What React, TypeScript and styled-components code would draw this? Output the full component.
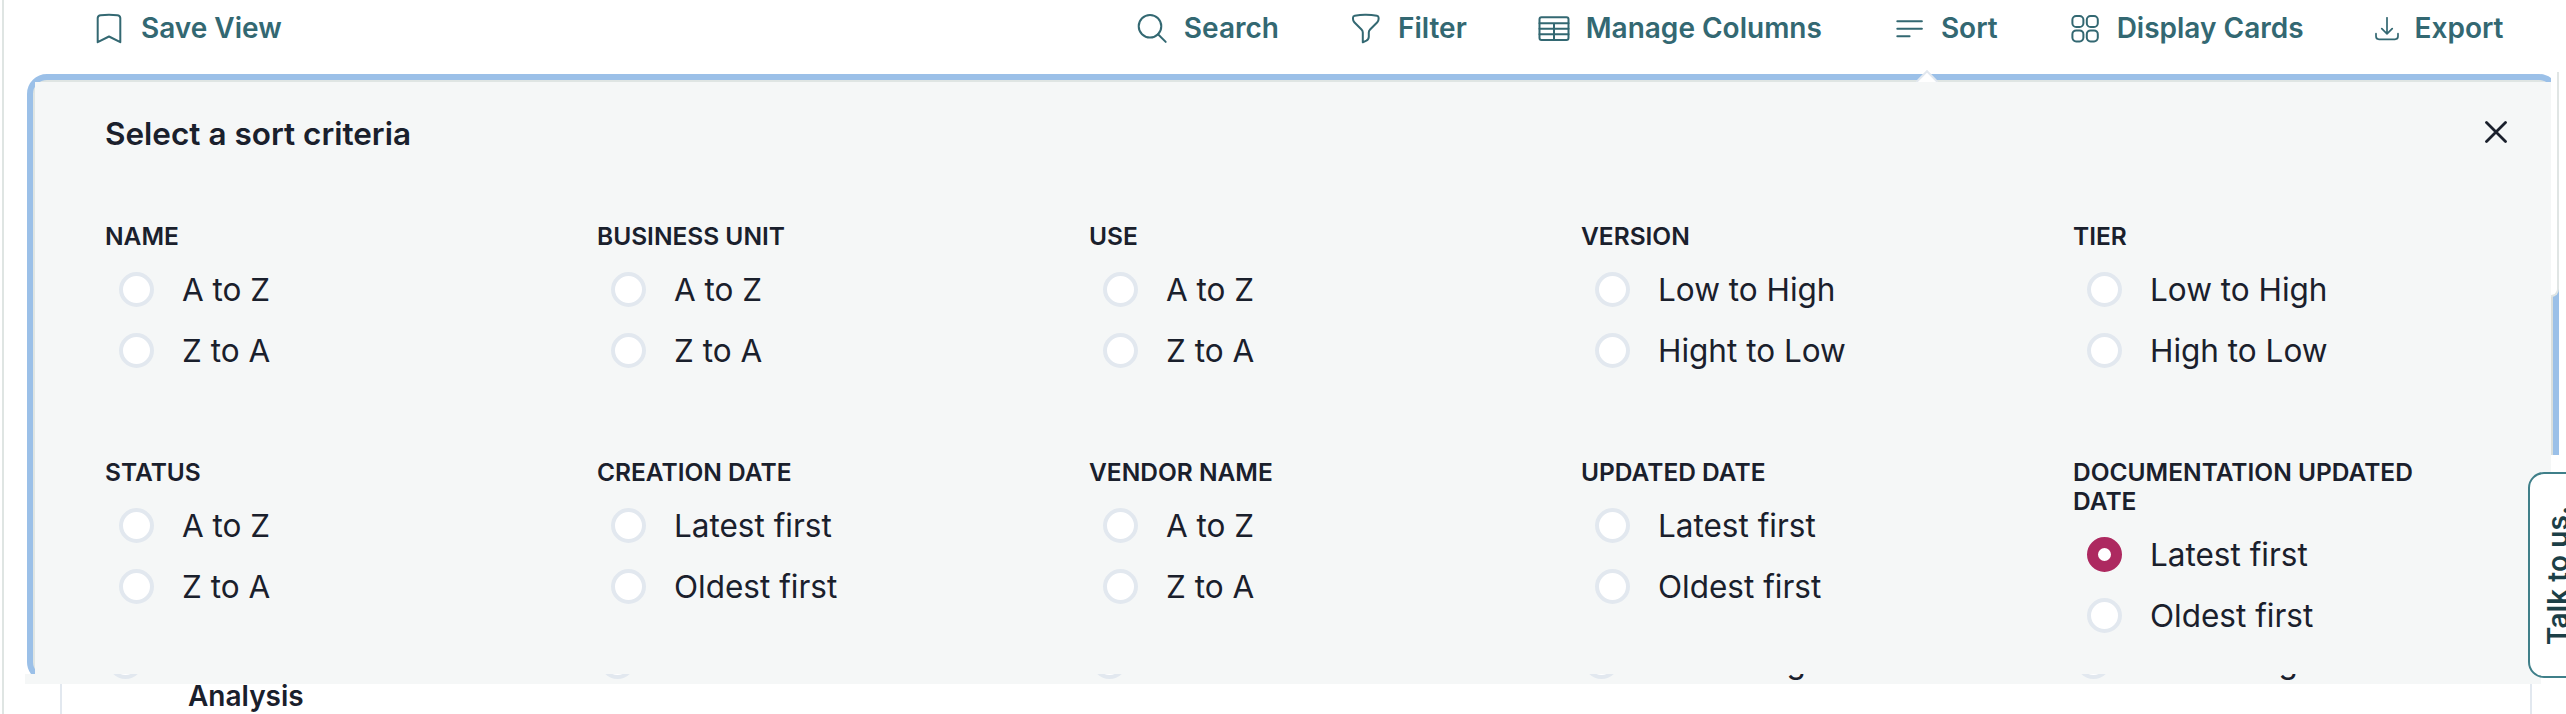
import React from "react";
import styled, { createGlobalStyle } from "styled-components";

const teal = "#336872";
const ink = "#1a202c";
const line = "#dfe5e3";
const ring = "#e2e8ef";
const surface = "#f5f7f7";
const blue = "#9bc0e8";

const GlobalStyle = createGlobalStyle`
  body {
    margin: 0;
    background: #fff;
    color: ${ink};
    font-family: Inter, "Liberation Sans", sans-serif;
    font-optical-sizing: none;
  }
  * { box-sizing: border-box; }
`;

const Page = styled.div`
  position: relative;
  width: 2566px;
  height: 714px;
  overflow: hidden;
  padding-left: 2px;
`;

const Shell = styled.main`
  height: 714px;
  border-left: 2px solid ${line};
`;

const Toolbar = styled.header`
  display: flex;
  justify-content: space-between;
  height: 72px;
  padding: 0 62.5px 16px 89px;
`;

const ToolGroup = styled.div`
  display: flex;
  gap: 71px;
`;

const Tool = styled.button`
  display: flex;
  align-items: center;
  gap: 16px;
  padding: 0;
  border: 0;
  background: none;
  color: ${teal};
  font: 600 28px/36px Inter, "Liberation Sans", sans-serif;
  white-space: nowrap;
  svg {
    display: block;
    position: relative;
    top: 1px;
  }
`;

const PanelRow = styled.div`
  display: flex;
  align-items: flex-start;
  height: 602px;
  padding-left: 23px;
`;

const PanelClip = styled.section`
  width: 2524px;
  height: 600px;
  margin-top: 2px;
  overflow: hidden;
`;

const PanelFrame = styled.div`
  width: 2532px;
  height: 608px;
  padding: 2px 0 0 2px;
  border: 6px solid ${blue};
  border-radius: 20px;
  background: ${line};
`;

const PanelBody = styled.div`
  width: 2516px;
  height: 600px;
  padding: 32px 44.5px 0 70px;
  background: ${surface};
`;

const PanelHead = styled.div`
  display: flex;
  justify-content: space-between;
  height: 108px;
`;

const Title = styled.h2`
  margin: 0;
  font-size: 31.5px;
  line-height: 40px;
  font-weight: 600;
`;

const CloseButton = styled.button`
  display: flex;
  width: 22px;
  height: 22px;
  margin-top: 6.5px;
  padding: 0;
  border: 0;
  background: none;
  color: ${ink};
`;

const Criteria = styled.div`
  display: grid;
  grid-template-columns: repeat(5, 492px);
  row-gap: 77px;
`;

const Criterion = styled.div`
  padding-right: 100px;
`;

const CriterionLabel = styled.h3`
  margin: 0 0 7.6px;
  font-size: 24.5px;
  line-height: 29.4px;
  font-weight: 600;
`;

const Option = styled.label`
  display: flex;
  align-items: center;
  gap: 28px;
  height: 61px;
  padding-left: 14px;
  font-size: 31.5px;
  white-space: nowrap;
`;

const Radio = styled.span<{ $on?: boolean }>`
  flex: none;
  width: 35px;
  height: 35px;
  border: ${(p) => (p.$on ? `11px solid #ad2960` : `4px solid ${ring}`)};
  border-radius: 50%;
  background: #fff;
`;

const EdgeTrack = styled.div`
  width: 8px;
  height: 383px;
  background: linear-gradient(to right, #dadfdd 2px, ${blue} 2px);
`;

const EdgeThumb = styled.div`
  width: 8px;
  height: 225px;
  border: solid #e0e5e4;
  border-width: 0 2px 2px 0;
  border-bottom-right-radius: 10px;
  background: #fff;
`;

const Caret = styled.svg`
  position: absolute;
  left: 1915px;
  top: 69px;
`;

const Underlay = styled.div`
  display: flex;
  align-items: flex-end;
  width: 2516px;
  height: 10px;
  margin-left: 21px;
  padding: 0 0 5px 69px;
  overflow: hidden;
  background: ${surface};
`;

const UnderlayCell = styled.div`
  flex: none;
  width: 492px;
  height: 35px;
  display: flex;
  align-items: center;
`;

const ListCard = styled.section`
  width: 2472px;
  height: 40px;
  margin-left: 56px;
  padding-left: 126px;
  border: solid ${ring};
  border-width: 0 2px;
  font-size: 28px;
  line-height: 24px;
  font-weight: 600;
`;

const ContactTab = styled.button`
  position: absolute;
  left: 2528px;
  top: 472px;
  width: 70px;
  height: 206px;
  display: flex;
  align-items: center;
  padding: 0 0 0 11px;
  border: 2px solid #3f7f89;
  border-radius: 16px;
  background: #fff;
  color: #1c3f47;
  font: 600 28px/34px Inter, "Liberation Sans", sans-serif;
`;

const ContactText = styled.span`
  width: 34px;
  height: 202px;
  writing-mode: vertical-rl;
  transform: rotate(180deg);
  text-align: center;
  letter-spacing: 0.1px;
  white-space: nowrap;
`;

const stroke = {
  fill: "none",
  stroke: "currentColor",
  strokeWidth: 2,
  strokeLinecap: "round" as const,
  strokeLinejoin: "round" as const,
};

const SaveIcon = () => (
  <svg width="32" height="32" viewBox="0 0 32 32" {...stroke}>
    <path d="M27.3 29.2 16 23.5 4.7 29.2V4.9A3.2 3.2 0 0 1 7.6 2.2Q16 1.4 24.4 2.2A3.2 3.2 0 0 1 27.3 4.9Z" />
  </svg>
);
const SearchIcon = () => (
  <svg width="32" height="32" viewBox="0 0 32 32" {...stroke}>
    <circle cx="14" cy="13.2" r="11.3" />
    <path d="m22 21.3 7.7 7.6" />
  </svg>
);
const FilterIcon = () => (
  <svg width="32" height="32" viewBox="0 0 32 32" {...stroke}>
    <path d="M16 1.8c3.7 0 7.3.3 10.9.9 1 .2 1.7 1 1.7 2v1.4a4.4 4.4 0 0 1-1.3 3.1l-7.2 7.3a4.4 4.4 0 0 0-1.3 3.1v4.2a4.4 4.4 0 0 1-2.4 3.9l-3.6 1.6v-9.7a4.4 4.4 0 0 0-1.3-3.1l-7.2-7.3a4.4 4.4 0 0 1-1.3-3.1v-1.4c0-1 .7-1.8 1.7-2 3.6-.6 7.2-.9 10.3-.9z" />
  </svg>
);
const TableIcon = () => (
  <svg width="32" height="32" viewBox="0 0 32 32" {...stroke}>
    <rect x="1.5" y="4.2" width="29" height="22.8" rx="2" />
    <path d="M1.5 10.2h29M1.5 15.8h29M1.5 21.3h29M16 10.2V27" />
  </svg>
);
const SortIcon = () => (
  <svg width="32" height="32" viewBox="0 0 32 32" {...stroke}>
    <path d="M4.3 8.2h24.6M4.3 15.7h24.6M4.3 23.3h12.3" />
  </svg>
);
const CardsIcon = () => (
  <svg width="32" height="32" viewBox="0 0 32 32" {...stroke}>
    <rect x="3.4" y="3" width="11" height="11" rx="3.8" />
    <rect x="17.8" y="3" width="11" height="11" rx="3.8" />
    <rect x="3.4" y="17.4" width="11" height="11" rx="3.8" />
    <rect x="17.8" y="17.4" width="11" height="11" rx="3.8" />
  </svg>
);
const ExportIcon = () => (
  <svg width="24" height="24" viewBox="0 0 24 24" {...stroke} strokeWidth={1.7}>
    <path d="M12 .8v16M6.8 11.7l5.2 5.2 5.2-5.2M1 16.7v2.6a3 3 0 0 0 3 3h16a3 3 0 0 0 3-3v-2.6" />
  </svg>
);

const tools = [
  { label: "Search", Icon: SearchIcon },
  { label: "Filter", Icon: FilterIcon },
  { label: "Manage Columns", Icon: TableIcon },
  { label: "Sort", Icon: SortIcon },
  { label: "Display Cards", Icon: CardsIcon },
  { label: "Export", Icon: ExportIcon },
];

const criteria: { label: string; options: string[]; selected?: number }[] = [
  { label: "NAME", options: ["A to Z", "Z to A"] },
  { label: "BUSINESS UNIT", options: ["A to Z", "Z to A"] },
  { label: "USE", options: ["A to Z", "Z to A"] },
  { label: "VERSION", options: ["Low to High", "Hight to Low"] },
  { label: "TIER", options: ["Low to High", "High to Low"] },
  { label: "STATUS", options: ["A to Z", "Z to A"] },
  { label: "CREATION DATE", options: ["Latest first", "Oldest first"] },
  { label: "VENDOR NAME", options: ["A to Z", "Z to A"] },
  { label: "UPDATED DATE", options: ["Latest first", "Oldest first"] },
  { label: "DOCUMENTATION UPDATED DATE", options: ["Latest first", "Oldest first"], selected: 0 },
];

const underlayOptions = ["A to Z", "A to Z", "A to Z", "Low to High", "Low to High"];

export default function App() {
  return (
    <Page>
      <GlobalStyle />
      <Shell>
        <Toolbar>
          <Tool>
            <SaveIcon />
            Save View
          </Tool>
          <ToolGroup>
            {tools.map(({ label, Icon }) => (
              <Tool key={label}>
                <Icon />
                {label}
              </Tool>
            ))}
          </ToolGroup>
        </Toolbar>

        <PanelRow>
          <PanelClip>
            <PanelFrame>
              <PanelBody>
                <PanelHead>
                  <Title>Select a sort criteria</Title>
                  <CloseButton aria-label="Close">
                    <svg width="22" height="22" viewBox="0 0 22 22" {...stroke} strokeWidth={2.8}>
                      <path d="m1.5 1.5 19 19M20.5 1.5l-19 19" />
                    </svg>
                  </CloseButton>
                </PanelHead>
                <Criteria>
                  {criteria.map((c) => (
                    <Criterion key={c.label}>
                      <CriterionLabel>{c.label}</CriterionLabel>
                      {c.options.map((o, i) => (
                        <Option key={o}>
                          <Radio $on={c.selected === i} />
                          {o}
                        </Option>
                      ))}
                    </Criterion>
                  ))}
                </Criteria>
              </PanelBody>
            </PanelFrame>
          </PanelClip>
          <EdgeTrack>
            <EdgeThumb />
          </EdgeTrack>
        </PanelRow>

        <Underlay>
          {underlayOptions.map((o, i) => (
            <UnderlayCell key={i}>
              <Option>
                <Radio />
                {o}
              </Option>
            </UnderlayCell>
          ))}
        </Underlay>
        <ListCard>Analysis</ListCard>
      </Shell>

      <Caret width="24" height="13" viewBox="0 0 24 13">
        <path d="M1.5 13 12 2.3 22.5 13" fill="#fff" stroke={ring} strokeWidth="2" />
      </Caret>
      <ContactTab>
        <ContactText>Talk to us.</ContactText>
      </ContactTab>
    </Page>
  );
}
